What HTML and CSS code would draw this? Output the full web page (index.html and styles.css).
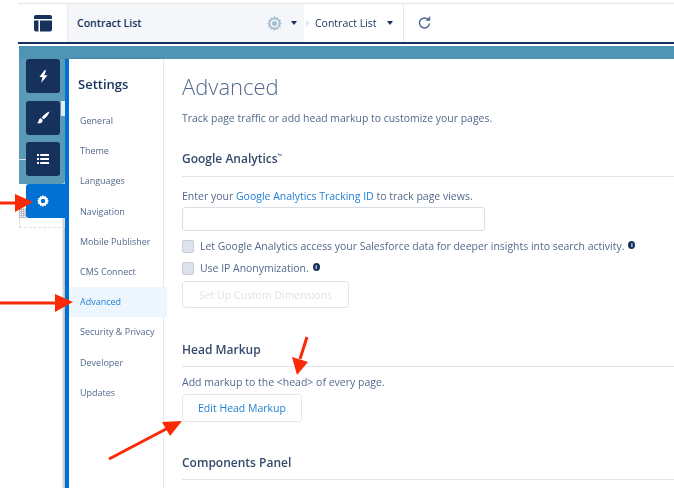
FILE: index.html
```html
<!DOCTYPE html>
<html lang="en">
<head>
<meta charset="utf-8">
<title>Advanced Settings</title>
<link rel="stylesheet" href="styles.css">
</head>
<body>
<div class="page">
  <header class="topbar">
    <div class="logo-cell">
      <svg width="18" height="17" viewBox="0 0 18 17"><path d="M2 0h14a2 2 0 0 1 2 2v2H0V2a2 2 0 0 1 2-2zM0 5.500h4.500V16.500H2a2 2 0 0 1-2-2zM6 5.500h12v9a2 2 0 0 1-2 2H6z" fill="#16325c"/></svg>
    </div>
    <div class="page-cell">
      <span class="page-title">Contract List</span>
      <svg class="gear-muted" width="15" height="15" viewBox="0 0 16 16"><path d="M8 0l1.500 2 2.400-.7.5 2.400 2.400.5-.7 2.400L16 8l-2 1.400.7 2.400-2.400.5-.5 2.400-2.400-.7L8 16l-1.500-2-2.400.7-.5-2.400-2.400-.5.7-2.400L0 8l2-1.400-.7-2.400 2.400-.5.5-2.400 2.400.7z" fill="#a8c0d4"/><circle cx="8" cy="8" r="3.500" fill="none" stroke="#f4f6f9" stroke-width="1.600"/></svg>
      <span class="caret"></span>
    </div>
    <div class="view-cell">
      <span class="chevron"></span>
      <span class="view-title">Contract List</span>
      <span class="caret"></span>
    </div>
    <div class="refresh-cell">
      <svg width="13" height="13" viewBox="0 0 13 13"><path d="M10.600 4A5 5 0 1 0 11.500 7.500" fill="none" stroke="#54698d" stroke-width="1.500"/><path d="M7.500 4.800h4.700V0z" fill="#54698d"/></svg>
    </div>
  </header>
  <div class="rule-navy"></div>
  <div class="band"></div>
  <div class="workspace">
    <div class="rail">
      <div class="rail-teal">
        <div class="tile">
          <svg width="9" height="13" viewBox="0 0 10 14"><path d="M6 0L0.500 7.500h3.300L2.500 14 9.500 5.500H5.800L8 0z" fill="#fff"/></svg>
        </div>
        <div class="tile">
          <svg width="13" height="13" viewBox="0 0 13 13"><path d="M12.600.400C9.500 1.400 6.500 3.800 4.700 6.500l1.800 1.800C9.200 6.500 11.600 3.500 12.600.400zM4 7.200C2.300 7.300 1.800 8.800 1.500 10.200c-.2.900-.7 1.500-1.300 1.800 2.300 1 5.300.2 5.500-3.100z" fill="#fff"/></svg>
        </div>
        <div class="tile">
          <svg width="12" height="10" viewBox="0 0 12 10"><path d="M0 0h2v2H0zM3.200 0H12v2H3.200zM0 4h2v2H0zM3.200 4H12v2H3.200zM0 8h2v2H0zM3.200 8H12v2H3.200z" fill="#fff"/></svg>
        </div>
        <span class="rail-handle"></span>
        <span class="rail-line"></span>
      </div>
      <div class="tile tile-active">
        <svg width="12" height="12" viewBox="0 0 16 16"><path d="M8 0l1.500 2 2.400-.7.5 2.400 2.400.5-.7 2.400L16 8l-2 1.400.7 2.400-2.400.5-.5 2.400-2.400-.7L8 16l-1.500-2-2.400.7-.5-2.400-2.400-.5.7-2.400L0 8l2-1.400-.7-2.400 2.400-.5.5-2.400 2.400.7z" fill="#fff"/><circle cx="8" cy="8" r="3" fill="#0070d2"/></svg>
      </div>
      <span class="rail-hatch"></span>
      <div class="rail-drop"></div>
    </div>
    <nav class="nav">
      <h2 class="nav-title">Settings</h2>
      <a class="nav-item">General</a>
      <a class="nav-item">Theme</a>
      <a class="nav-item">Languages</a>
      <a class="nav-item">Navigation</a>
      <a class="nav-item">Mobile Publisher</a>
      <a class="nav-item">CMS Connect</a>
      <a class="nav-item nav-current">Advanced</a>
      <a class="nav-item">Security &amp; Privacy</a>
      <a class="nav-item">Developer</a>
      <a class="nav-item">Updates</a>
    </nav>
    <main class="content">
      <h1 class="title">Advanced</h1>
      <p class="lead">Track page traffic or add head markup to customize your pages.</p>

      <section class="section-ga">
        <h3 class="section-head">Google Analytics<sup class="tm">™</sup></h3>
        <p class="text">Enter your <a class="link">Google Analytics Tracking ID</a> to track page views.</p>
        <div class="input"></div>
        <div class="check"><span class="box"></span><span class="check-label">Let Google Analytics access your Salesforce data for deeper insights into search activity.</span><span class="info">i</span></div>
        <div class="check"><span class="box"></span><span class="check-label">Use IP Anonymization.</span><span class="info">i</span></div>
        <div class="btn btn-disabled">Set Up Custom Dimensions</div>
      </section>

      <section class="section-head-markup">
        <h3 class="section-head section-head-tight">Head Markup</h3>
        <p class="text">Add markup to the &lt;head&gt; of every page.</p>
        <div class="btn btn-edit">Edit Head Markup</div>
      </section>

      <section class="section-components">
        <h3 class="section-head section-head-tight">Components Panel</h3>
      </section>
    </main>
  </div>
  <svg class="arrows" width="674" height="488" viewBox="0 0 674 488">
    <g fill="#fb2a06" stroke="#fb2a06">
      <path d="M0 203H16" stroke-width="3" fill="none"/>
      <path d="M15 194L33 202 15 212z" stroke="none"/>
      <path d="M0 303H56" stroke-width="3" fill="none"/>
      <path d="M55 294L73 302 55 312z" stroke="none"/>
      <path d="M307 337L300 359" stroke-width="3" fill="none"/>
      <path d="M292 357L308 362 297 375z" stroke="none"/>
      <path d="M109 459L168 428" stroke-width="3" fill="none"/>
      <path d="M162 422L182 421 170 436z" stroke="none"/>
    </g>
  </svg>
</div>
</body>
</html>
```
FILE: styles.css
```css
* { box-sizing: border-box; }
html, body { margin: 0; padding: 0; background: #fff; }
body { font-family: "Open Sans", "Liberation Sans", sans-serif; color: #54698d; }
.page { position: relative; width: 674px; height: 488px; overflow: hidden; filter: blur(.35px); }
.page::before { content: ""; display: block; height: 1px; background: #e8e6e2; position: absolute; top: 3px; left: 18px; right: 0; }

.topbar { display: flex; height: 38px; margin: 4px 0 0 18px; position: relative; }
.logo-cell { width: 50px; display: flex; align-items: center; justify-content: center; background: #fff; border-right: 1px solid #e6e9ef; }
.page-cell { width: 236px; display: flex; align-items: center; padding-left: 9px; background: #f4f6f9; }
.page-title { font-size: 10.500px; font-weight: 600; color: #16325c; }
.gear-muted { margin-left: auto; }
.page-cell .caret { margin: 0 7px 0 9px; }
.caret { display: inline-block; width: 0; height: 0; border-left: 3.500px solid transparent; border-right: 3.500px solid transparent; border-top: 4px solid #16325c; }
.view-cell { width: 100px; display: flex; align-items: center; padding-left: 2px; border-right: 1px solid #e6e9ef; }
.chevron { width: 0; height: 0; margin-right: 5px; border-top: 4px solid transparent; border-bottom: 4px solid transparent; border-left: 4px solid #e6e9ef; }
.view-title { font-size: 10.500px; color: #16325c; }
.view-cell .caret { margin-left: 10px; }
.refresh-cell { display: flex; align-items: center; padding-left: 14px; padding-bottom: 2px; }

.rule-navy { height: 2px; margin-left: 18px; background: #16325c; }
.band { height: 13px; margin: 2px 0 0 19px; background: #4f94b3; }

.workspace { display: flex; height: 429px; margin-left: 19px; }
.rail { width: 46px; flex: none; position: relative; }
.rail-teal { position: relative; height: 125px; padding: 0 0 0 7px; background: #5b9ab6; display: flex; flex-direction: column; gap: 7.500px; border-bottom-right-radius: 4px; }
.rail-handle { position: absolute; top: 42px; right: 0; width: 4px; height: 15px; background: #e6ebef; }
.rail-line { position: absolute; top: 100px; left: 0; width: 7px; height: 1px; background: #cfe0e8; }
.rail-hatch { position: absolute; top: 149px; left: 0; width: 7px; height: 10px; background: repeating-linear-gradient(90deg, #b9bec6 0 1px, transparent 1px 2px), repeating-linear-gradient(0deg, #b9bec6 0 1px, #fff 1px 2px); }
.tile { width: 34px; height: 34px; background: #16325c; border-radius: 3px; display: flex; align-items: center; justify-content: center; }
.tile-active { width: 39px; margin-left: 7px; background: #0070d2; border-radius: 3px 0 0 3px; padding-right: 5px; }
.rail-drop { height: 10px; border: 1px dashed #d8dde6; border-top: 0; }

.nav { width: 99px; flex: none; border-left: 4px solid #0070d2; border-right: 1px solid #e6e9ef; box-shadow: -2px 0 2px rgba(40,40,40,.3); background: #fff; padding-top: 16px; }
.nav-title { margin: 0 0 13px 9px; font-size: 13px; line-height: 18px; font-weight: 600; color: #16325c; }
.nav-item { display: block; height: 30.200px; line-height: 30px; padding-left: 11px; font-size: 9px; color: #54698d; }
.nav-current { background: #eef6fd; color: #1f7fd4; width: 98px; }

.content { flex: 1; padding: 12px 0 0 18px; min-width: 0; }
.title { margin: 0; font-size: 22px; line-height: 30px; font-weight: 300; color: #54698d; }
.lead { margin: 10px 0 0; font-size: 10.450px; line-height: 14px; color: #54698d; white-space: nowrap; }
.section-head { margin: 0; font-size: 12px; line-height: 16px; font-weight: 600; color: #344a6b; border-bottom: 1px solid #e2e6ec; padding-bottom: 9px; }
.section-head-tight { padding-bottom: 8px; }
.tm { font-size: 6px; line-height: 0; }
.section-ga { margin-top: 26px; }
.text { margin: 0; font-size: 10.500px; line-height: 14px; color: #54698d; white-space: nowrap; }
.section-ga .text { margin-top: 12px; }
.link { color: #1f7fd4; }
.input { width: 303px; height: 24px; margin-top: 4px; background: #fff; border: 1px solid #d8dde6; border-radius: 3px; }
.check { display: flex; align-items: center; height: 22px; }
.input + .check { margin-top: 4px; }
.box { width: 12px; height: 13px; background: #dde2ec; border: 1px solid #c6ccd8; border-radius: 2px; margin-right: 6px; }
.check-label { font-size: 10.450px; color: #54698d; white-space: nowrap; }
.info { width: 7px; height: 8px; margin-left: 4px; border-radius: 50%; background: #16325c; color: #fff; font-size: 6px; line-height: 8px; text-align: center; font-weight: 700; position: relative; top: -1px; }
.btn { display: flex; align-items: center; justify-content: center; border: 1px solid #e2e6ec; border-radius: 3px; font-size: 10.500px; background: #fff; }
.btn-disabled { width: 167px; height: 27px; margin-top: 2px; color: #dfe3ea; }
.btn-edit { width: 120px; height: 28px; margin-top: 5px; color: #1f7fd4; }
.section-head-markup { margin-top: 34px; }
.section-head-markup .text { margin-top: 8px; }
.section-components { margin-top: 33px; }
.arrows { position: absolute; top: 0; left: 0; pointer-events: none; }
```
